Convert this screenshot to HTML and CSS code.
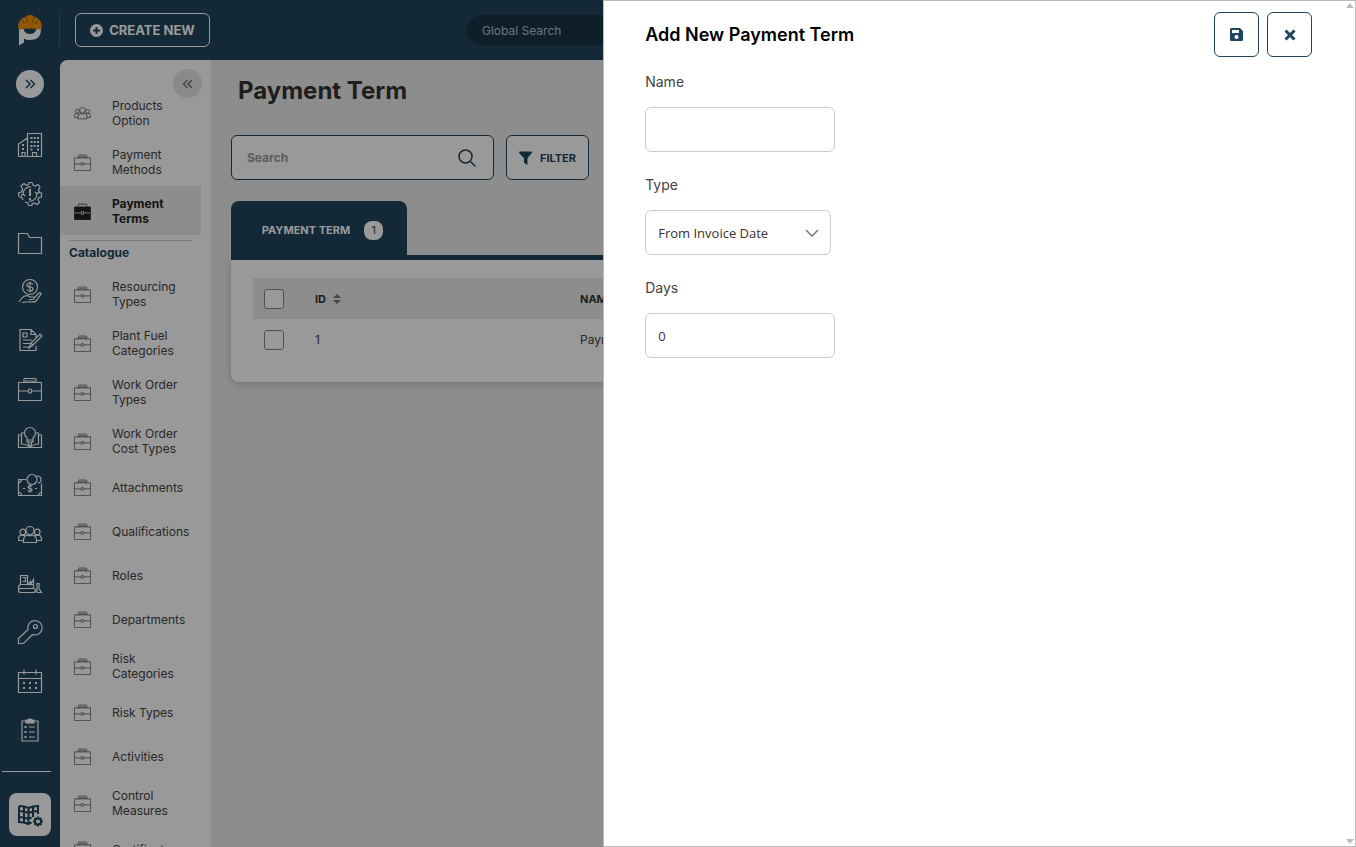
FILE: index.html
```
<!doctype html>
<html lang="en">
<head>
    <meta charset="UTF-8">
    <title>Payment Term</title>

    <link rel="stylesheet" href="styles.css">
</head>
<body>

<svg class="sprite" aria-hidden="true">
    <symbol id="case" viewBox="0 0 24 24">
        <path d="M.5 5.500h23v18H.500zM6 5.500V2.500q0-1 1-1h10q1 0 1 1v3M8 5.500v-1.500h8v1.500M.5 14h10M13.500 14h10"/>
        <rect x="10.500" y="12" width="3" height="4" rx="1"/>
    </symbol>
    <symbol id="case-solid" viewBox="0 0 24 24">
        <path fill="currentColor" d="M.5 5.500h23v18H.500z"/>
        <path d="M6 5.500V2.500q0-1 1-1h10q1 0 1 1v3"/>
        <path stroke="#fff" d="M1 14h9M14 14h9M10.500 12h3v4h-3z"/>
    </symbol>
    <symbol id="people" viewBox="0 0 24 24">
        <circle cx="12" cy="7.500" r="4"/>
        <circle cx="4.800" cy="9" r="2.800"/>
        <circle cx="19.200" cy="9" r="2.800"/>
        <path d="M5.500 19.500v-2q0-4.500 4-5.500 2.500 1.500 5 0 4 1 4 5.500v2zM5.500 17.500h-5v-2q0-3 3-3.500 2 1 3.500 0M18.500 17.500h5v-2q0-3-3-3.500-2 1-3.500 0"/>
    </symbol>
</svg>

<div class="app">

    <header class="topbar">
        <a href="#" class="logo" aria-label="Home">
            <svg width="26" height="32" viewBox="0 0 26 32">
                <path class="logo-letter" d="M2 15h4.500q1 5 6.500 5 5 0 6.500-5H24q0 11-11 11-4 0-6-1.500v4L2 31.500z"/>
                <path class="logo-hat" d="M1 14Q1 5 9 2.500L11 1h4l2 1.500Q25 5 25 14l-2 1.500q-10-2-20 0z"/>
                <path class="logo-line" d="M9.500 3l1 6M16.500 3l-1 6M5.500 6l2 4M20.500 6l-2 4"/>
            </svg>
        </a>
        <button type="button" class="create-btn">
            <svg width="13" height="13" viewBox="0 0 13 13"><circle cx="6.500" cy="6.500" r="6.500"/><path d="M6.500 3v7M3 6.500h7"/></svg>
            CREATE NEW
        </button>
        <input type="search" class="global-search" placeholder="Global Search" aria-label="Global Search">
    </header>

    <aside class="rail">
        <button type="button" class="rail-toggle" aria-label="Expand menu">
            <svg width="12" height="12" viewBox="0 0 12 12"><path d="M2 2l4 4-4 4M6.500 2l4 4-4 4"/></svg>
        </button>
        <nav class="rail-nav">
            <a href="#" aria-label="Company">
                <svg viewBox="0 0 24 24"><path d="M9.500 23.500V.5h14v23zM.5 23.500V11l9-6M.5 23.500h23M14.500 23.500v-4h4v4M4 23.500v-4h3v4"/><path class="dots" d="M12.500 5h2M15.700 5h2M19 5h2M12.500 9h2M15.700 9h2M19 9h2M12.500 13h2M15.700 13h2M19 13h2M12.500 16.500h2M19 16.500h2M4 12h2M4 16h2"/></svg>
            </a>
            <a href="#" aria-label="Alerts">
                <svg viewBox="0 0 24 24"><path d="M1 15l-.5-4 3-1 1-3-1.500-3 3-2.500 2.500 2 2-1L11 .5h3l1 2.500 2.500 1 2.500-1.500 2 2.500-1.500 3 1 2.500 2 .5v4l-2.500.5-1 2 1.500 3-2.500 2-2.500-1.500-2.500 1L14 23.500h-3.500L10 21l-3-1M1 15l3 .5 1 2.500M5 12a7 7 0 0 1 8-7M19 12a7 7 0 0 1-8 7M3 14l2-2 2 2M21 10l-2 2-2-2"/><path class="dots" d="M12 7v7M12 16v2"/></svg>
            </a>
            <a href="#" aria-label="Files">
                <svg viewBox="0 0 24 24"><path d="M.5 22.500v-20h9l2 4h12v16z"/></svg>
            </a>
            <a href="#" aria-label="Finance">
                <svg viewBox="0 0 24 24"><circle cx="12" cy="8" r="7.500"/><path d="M15 5.500q-1-1.500-3-1.500-3 0-3 2t3 2 3 2-3 2q-2 0-3-1.500M12 2.500v11M1 23q3-5 6-6 3-1 5 1h3q2 0 1 2l-5 1M16 19l5-5q2-1 2 1l-5 7q-1 1-4 1H8l-4 .5"/></svg>
            </a>
            <a href="#" aria-label="Contracts">
                <svg viewBox="0 0 24 24"><path d="M18 18v4.500H2V1.500h11l5 5v3M13 1.500v5h5M5 5h4v4H5zM5 12h9M5 15.500h7M5 19h6M11 20l2-5 9-9 2 2-9 9zM13 15l2 2"/></svg>
            </a>
            <a href="#" aria-label="Jobs">
                <svg><use href="#case"/></svg>
            </a>
            <a href="#" aria-label="Knowledge">
                <svg viewBox="0 0 24 24"><path d="M9 13q-2.500-2-2.500-5a5.500 5.500 0 0 1 11 0q0 3-2.500 5v4H9zM9 15h6M10.500 17v3h3v-3M12 20v3M6 8H3.500v11q5 0 8.500 3.500Q15.500 19 20.500 19V8H18M3.500 10h-3v12.500h23V10h-3"/></svg>
            </a>
            <a href="#" aria-label="Payments">
                <svg viewBox="0 0 24 24"><path d="M8 5.500H.5v16h23v-12M.5 8.500q3 0 3-3M23.500 18.500q-3 0-3 3M.5 18.500q3 0 3 3M14 12.500q-1-1-2-1-2 0-2 1.500t2 1.500 2 1.500-2 1.500-2-1M12 10.500v8M5 14.500h2M17 14.500h2"/><circle cx="14" cy="5.500" r="5"/><path d="M18.500 2q4.500 0 4.500 3.500t-3 3.500"/></svg>
            </a>
            <a href="#" aria-label="People">
                <svg><use href="#people"/></svg>
            </a>
            <a href="#" aria-label="Plant">
                <svg viewBox="0 0 24 24"><path d="M2.500 12.500v-9h7v9M4.500 5.500h3v4h-3M9.500 12.500l3-3v3l3-5v5M2.500 12.500h13v4h-15v-2l2-2M3 16.500h12q2.500 0 2.500 2t-2.500 2H3q-2.500 0-2.500-2t2.500-2M19 20.500v-9h2v5l2.500 4z"/></svg>
            </a>
            <a href="#" aria-label="Access">
                <svg viewBox="0 0 24 24"><path d="M.5 23.500v-5l9.500-9a7.200 7.200 0 1 1 4.500 5L11 18l-5.500 5.500z"/><circle cx="17.500" cy="6.500" r="2"/></svg>
            </a>
            <a href="#" aria-label="Calendar">
                <svg viewBox="0 0 24 24"><path d="M.5 3.500h23v20H.5zM.5 9.500h23M6 .5v5M18 .5v5"/><path class="dots" d="M5 14h2M11 14h2M17 14h2M5 19h2M11 19h2M17 19h2"/></svg>
            </a>
            <a href="#" aria-label="Checklists">
                <svg viewBox="0 0 24 24"><path d="M8 3H4v20h16V3h-4M11 9h6M11 14h6M11 19h6"/><path fill="currentColor" d="M8 2h2l1-1h2l1 1h2v3H8z"/><path class="dots" d="M6.500 9h2M6.500 14h2M6.500 19h2"/></svg>
            </a>
        </nav>
        <hr class="rail-line">
        <a href="#" class="rail-active" aria-label="Library">
            <svg width="26" height="24" viewBox="0 0 26 24">
                <path d="M2 3q5 0 9.500 2Q16 3 21 3v8M2 3v16q5 0 9.500 2 1.500-1 3-1.500M11.500 5v16M7 4v16M16 4v10M2 8q5 0 9.500 2Q16 8 21 8M2 14q5 0 9.500 2l3-1.500"/>
                <circle cx="21" cy="18.500" r="3"/>
                <path d="M21 13.500v2M21 21.500v2M16 18.500h2M24 18.500h2M17.500 15l1 1M23.500 21l1 1M24.500 15l-1 1M18.500 21l-1 1"/>
            </svg>
        </a>
    </aside>

    <div class="content">

        <aside class="submenu">
            <button type="button" class="submenu-toggle" aria-label="Collapse menu">
                <svg width="12" height="12" viewBox="0 0 12 12"><path d="M5.500 2l-4 4 4 4M10 2L6 6l4 4"/></svg>
            </button>
            <nav class="submenu-nav">
                <a href="#" class="submenu-item"><svg><use href="#people"/></svg><span>Products Option</span></a>
                <a href="#" class="submenu-item"><svg><use href="#case"/></svg><span>Payment Methods</span></a>
                <a href="#" class="submenu-item active"><svg><use href="#case-solid"/></svg><span>Payment Terms</span></a>
                <h2 class="submenu-title">Catalogue</h2>
                <a href="#" class="submenu-item"><svg><use href="#case"/></svg><span>Resourcing Types</span></a>
                <a href="#" class="submenu-item"><svg><use href="#case"/></svg><span>Plant Fuel Categories</span></a>
                <a href="#" class="submenu-item"><svg><use href="#case"/></svg><span>Work Order Types</span></a>
                <a href="#" class="submenu-item"><svg><use href="#case"/></svg><span>Work Order Cost Types</span></a>
                <a href="#" class="submenu-item"><svg><use href="#case"/></svg><span>Attachments</span></a>
                <a href="#" class="submenu-item"><svg><use href="#case"/></svg><span>Qualifications</span></a>
                <a href="#" class="submenu-item"><svg><use href="#case"/></svg><span>Roles</span></a>
                <a href="#" class="submenu-item"><svg><use href="#case"/></svg><span>Departments</span></a>
                <a href="#" class="submenu-item"><svg><use href="#case"/></svg><span>Risk Categories</span></a>
                <a href="#" class="submenu-item"><svg><use href="#case"/></svg><span>Risk Types</span></a>
                <a href="#" class="submenu-item"><svg><use href="#case"/></svg><span>Activities</span></a>
                <a href="#" class="submenu-item"><svg><use href="#case"/></svg><span>Control Measures</span></a>
                <a href="#" class="submenu-item"><svg><use href="#case"/></svg><span>Certificates</span></a>
            </nav>
        </aside>

        <main class="main">
            <h1 class="page-title">Payment Term</h1>

            <div class="toolbar">
                <div class="search">
                    <input type="text" placeholder="Search" aria-label="Search">
                    <svg width="18" height="18" viewBox="0 0 18 18"><circle cx="7.500" cy="7.500" r="6.500"/><path d="M12.500 12.500l5 5"/></svg>
                </div>
                <button type="button" class="filter-btn">
                    <svg width="13" height="14" viewBox="0 0 13 14"><path d="M0 1.500Q0 .5 1 .5h11q1 0 1 1 0 .5-.5 1L8.500 7v6q0 1-1 .5l-2-1.500q-.5-.5-.5-1V7L.5 2.500Q0 2 0 1.500z"/></svg>
                    FILTER
                </button>
            </div>

            <div class="tabs">
                <button type="button" class="tab">PAYMENT TERM <span class="badge">1</span></button>
            </div>

            <div class="card">
                <table class="table">
                    <thead>
                        <tr>
                            <th class="col-check"><input type="checkbox" aria-label="Select all"></th>
                            <th class="col-id">ID <svg width="8" height="10" viewBox="0 0 8 10"><path d="M0 4l4-4 4 4zM0 6l4 4 4-4z"/></svg></th>
                            <th>NAME</th>
                        </tr>
                    </thead>
                    <tbody>
                        <tr>
                            <td class="col-check"><input type="checkbox" aria-label="Select row 1"></td>
                            <td>1</td>
                            <td>Payment Term</td>
                        </tr>
                    </tbody>
                </table>
            </div>
        </main>

    </div>
</div>

<div class="overlay"></div>

<section class="drawer" aria-labelledby="drawerTitle">
    <header class="drawer-header">
        <h2 id="drawerTitle" class="drawer-title">Add New Payment Term</h2>
        <button type="button" class="icon-btn" aria-label="Save">
            <svg width="13" height="13" viewBox="0 0 13 13"><path fill-rule="evenodd" d="M1.500 0H10l3 3v8.500q0 1.500-1.500 1.500h-10Q0 13 0 11.500v-10Q0 0 1.500 0zM2 2v3h7V2zM6.500 7a2 2 0 1 0 0 4 2 2 0 1 0 0-4z"/></svg>
        </button>
        <button type="button" class="icon-btn" aria-label="Close">
            <svg class="cross" width="12" height="12" viewBox="0 0 12 12"><path d="M1.500 1.500l9 9M10.500 1.500l-9 9"/></svg>
        </button>
    </header>
    <form class="form">
        <div class="field">
            <label for="name">Name</label>
            <input type="text" id="name">
        </div>
        <div class="field">
            <label for="type">Type</label>
            <div class="select-wrapper">
                <select id="type">
                    <option>From Invoice Date</option>
                </select>
                <svg width="14" height="8" viewBox="0 0 14 8"><path d="M1 1l6 6 6-6"/></svg>
            </div>
        </div>
        <div class="field">
            <label for="days">Days</label>
            <input type="text" id="days" value="0">
        </div>
    </form>
    <span class="arrow arrow-up"></span>
    <span class="arrow arrow-down"></span>
</section>

</body>
</html>
```

FILE: styles.css
```
* {
    box-sizing: border-box;
    margin: 0;
    padding: 0;
}

body {
    height: 100vh;
    overflow: hidden;
    background: #21455d;
    color: #444;
    font-family: Inter, "Open Sans", sans-serif;
    font-size: 12px;
}

button,
input,
select {
    font-family: inherit;
}

a {
    color: inherit;
    text-decoration: none;
}

svg {
    flex-shrink: 0;
    fill: none;
    stroke: currentColor;
}

.sprite {
    display: none;
}

.app {
    display: grid;
    grid-template-columns: 60px 1fr;
    grid-template-rows: 60px 1fr;
    height: 100vh;
}

/* top bar */

.topbar {
    grid-column: 1 / 3;
    display: flex;
    align-items: center;
}

.logo {
    display: flex;
    justify-content: center;
    width: 60px;
    height: 32px;
    border-right: 1px solid #47667a;
}

.logo-letter {
    fill: #fff;
    stroke: none;
}

.logo-hat {
    fill: #f39208;
    stroke: none;
}

.logo-line {
    stroke: #9c5c05;
}

.create-btn {
    display: flex;
    align-items: center;
    justify-content: center;
    gap: 6px;
    width: 135px;
    height: 34px;
    margin-left: 15px;
    border: 1px solid #fff;
    border-radius: 6px;
    background: none;
    color: #fff;
    font-size: 13px;
    font-weight: 700;
}

.create-btn circle {
    fill: #fff;
    stroke: none;
}

.create-btn path {
    stroke: #21455d;
    stroke-width: 2;
}

.global-search {
    width: 422px;
    height: 30px;
    margin-left: 257px;
    padding: 0 15px;
    border: 0;
    border-radius: 15px;
    background: #183547;
    font-size: 12px;
}

.global-search::placeholder {
    color: #b8c2ca;
}

/* icon rail */

.rail {
    display: flex;
    flex-direction: column;
    align-items: center;
    min-height: 0;
    padding: 10px 0 11px;
    color: #fff;
}

.rail-toggle {
    display: flex;
    align-items: center;
    justify-content: center;
    width: 28px;
    height: 28px;
    border: 0;
    border-radius: 50%;
    background: #fff;
    color: #21455d;
}

.rail-toggle svg,
.submenu-toggle svg {
    stroke-width: 1.5;
}

.rail-nav {
    flex: 1;
    display: grid;
    grid-auto-rows: 1fr;
    margin: 23px 0 17px;
}

.rail-nav a {
    display: flex;
    align-items: center;
}

.rail-nav svg {
    width: 24px;
    height: 24px;
    overflow: visible;
    stroke-width: 1.2;
}

.rail-nav .dots {
    stroke-width: 2;
}

.rail-line {
    align-self: flex-start;
    width: 49px;
    margin: 0 0 21px 2px;
    border: 0;
    border-top: 1px solid #fff;
}

.rail-active {
    display: flex;
    align-items: center;
    justify-content: center;
    width: 42px;
    height: 43px;
    border-radius: 8px;
    background: #fff;
    color: #21455d;
}

.rail-active svg {
    stroke-width: 2;
}

/* second level menu */

.content {
    display: grid;
    grid-template-columns: 151px 1fr;
    min-height: 0;
    overflow: hidden;
    border-top-left-radius: 8px;
    background: #ececec;
}

.submenu {
    position: relative;
    padding: 28px 10px 0 0;
    background: #fff;
}

.submenu-toggle {
    position: absolute;
    top: 9px;
    right: 9px;
    display: flex;
    align-items: center;
    justify-content: center;
    width: 29px;
    height: 29px;
    border: 0;
    border-radius: 50%;
    background: #e6e6e6;
    color: #777;
}

.submenu-item {
    display: flex;
    align-items: center;
    gap: 21px;
    min-height: 44px;
    padding: 10px 8px 9px 14px;
    line-height: 15px;
}

.submenu-item svg {
    width: 17px;
    height: 17px;
    overflow: visible;
}

.submenu-item.active {
    background: #ececec;
    color: #222;
    font-weight: 700;
}

.submenu-title {
    margin: 5px 9px 8px;
    padding-top: 4px;
    border-top: 1px solid #ccc;
    color: #21455d;
    font-size: 12px;
    line-height: 16px;
}

/* page */

.main {
    padding: 13px 20px;
}

.page-title {
    margin-bottom: 26px;
    padding-left: 7px;
    color: #333;
    font-size: 24px;
    line-height: 36px;
}

.toolbar {
    display: flex;
    gap: 12px;
    margin-bottom: 21px;
}

.search {
    display: flex;
    align-items: center;
    width: 263px;
    height: 45px;
    padding: 0 17px 0 15px;
    border: 1px solid #21455d;
    border-radius: 6px;
    background: #fff;
}

.search svg {
    color: #21455d;
    stroke-width: 1.5;
}

.search input {
    flex: 1;
    min-width: 0;
    border: 0;
    background: none;
    font-size: 12px;
}

.search input::placeholder {
    color: #999;
    font-weight: 700;
}

.filter-btn {
    display: flex;
    align-items: center;
    justify-content: center;
    gap: 8px;
    width: 83px;
    border: 1px solid #21455d;
    border-radius: 6px;
    background: #fff;
    color: #21455d;
    font-size: 11px;
    font-weight: 700;
}

.filter-btn svg,
.icon-btn svg,
.table svg {
    fill: currentColor;
    stroke: none;
}

.tabs {
    display: flex;
    border-bottom: 5px solid #21455d;
}

.tab {
    display: flex;
    align-items: center;
    justify-content: center;
    gap: 14px;
    width: 176px;
    height: 54px;
    padding: 4px 0 0 7px;
    border: 0;
    border-radius: 8px 8px 0 0;
    background: #21455d;
    color: #fff;
    font-size: 11px;
    font-weight: 700;
}

.badge {
    width: 19px;
    border-radius: 8px;
    background: #fff;
    color: #444;
    font-weight: 400;
    line-height: 19px;
}

.card {
    padding: 18px 22px 22px;
    border-radius: 0 0 8px 8px;
    background: #fff;
    box-shadow: 0 2px 10px rgba(0, 0, 0, .2);
}

.table {
    width: 100%;
    border-collapse: collapse;
    table-layout: fixed;
}

.table tr {
    height: 41px;
}

.table thead {
    background: #ececec;
}

.table th {
    color: #333;
    font-size: 11px;
    text-align: left;
}

.table .col-check {
    width: 62px;
    padding-left: 11px;
}

.table .col-id {
    width: 265px;
}

.table th svg {
    margin-left: 4px;
    color: #777;
    vertical-align: -1px;
}

.table input {
    display: block;
    width: 20px;
    height: 20px;
    border: 1px solid #888;
    border-radius: 3px;
    background: #fff;
    appearance: none;
}

.overlay {
    position: fixed;
    inset: 0;
    background: rgba(0, 0, 0, .4);
}

/* drawer */

.drawer {
    position: fixed;
    top: 0;
    right: 0;
    bottom: 0;
    width: calc(55vw + 7px);
    padding: 11px 43px 0 41px;
    border: 1px solid #bbb;
    background: #fff;
}

.drawer-header {
    display: flex;
    align-items: center;
    gap: 8px;
    margin-bottom: 14px;
}

.drawer-title {
    flex: 1;
    color: #000;
    font-size: 18px;
    font-weight: 600;
}

.icon-btn {
    display: flex;
    align-items: center;
    justify-content: center;
    width: 45px;
    height: 45px;
    border: 1px solid #21455d;
    border-radius: 6px;
    background: #fff;
    color: #21455d;
}

.icon-btn .cross {
    stroke: currentColor;
    stroke-width: 3;
}

.field {
    margin-bottom: 22px;
}

.field label {
    display: block;
    margin-bottom: 14px;
    font-size: 14px;
    line-height: 22px;
}

.field input,
.field select {
    display: block;
    width: 190px;
    height: 45px;
    padding: 0 12px;
    border: 1px solid #ccc;
    border-radius: 6px;
    background: #fff;
    color: #333;
    font-family: "Open Sans", sans-serif;
    font-size: 13px;
    appearance: none;
}

.select-wrapper {
    position: relative;
    width: 186px;
}

.select-wrapper select {
    width: 100%;
}

.select-wrapper svg {
    position: absolute;
    top: 19px;
    right: 12px;
    color: #777;
    stroke-width: 1.5;
    pointer-events: none;
}

.arrow {
    position: absolute;
    right: 1px;
    border: 4px solid transparent;
}

.arrow-up {
    top: 2px;
    border-top: 0;
    border-bottom: 5px solid #bbb;
}

.arrow-down {
    bottom: 2px;
    border-bottom: 0;
    border-top: 5px solid #bbb;
}
```
